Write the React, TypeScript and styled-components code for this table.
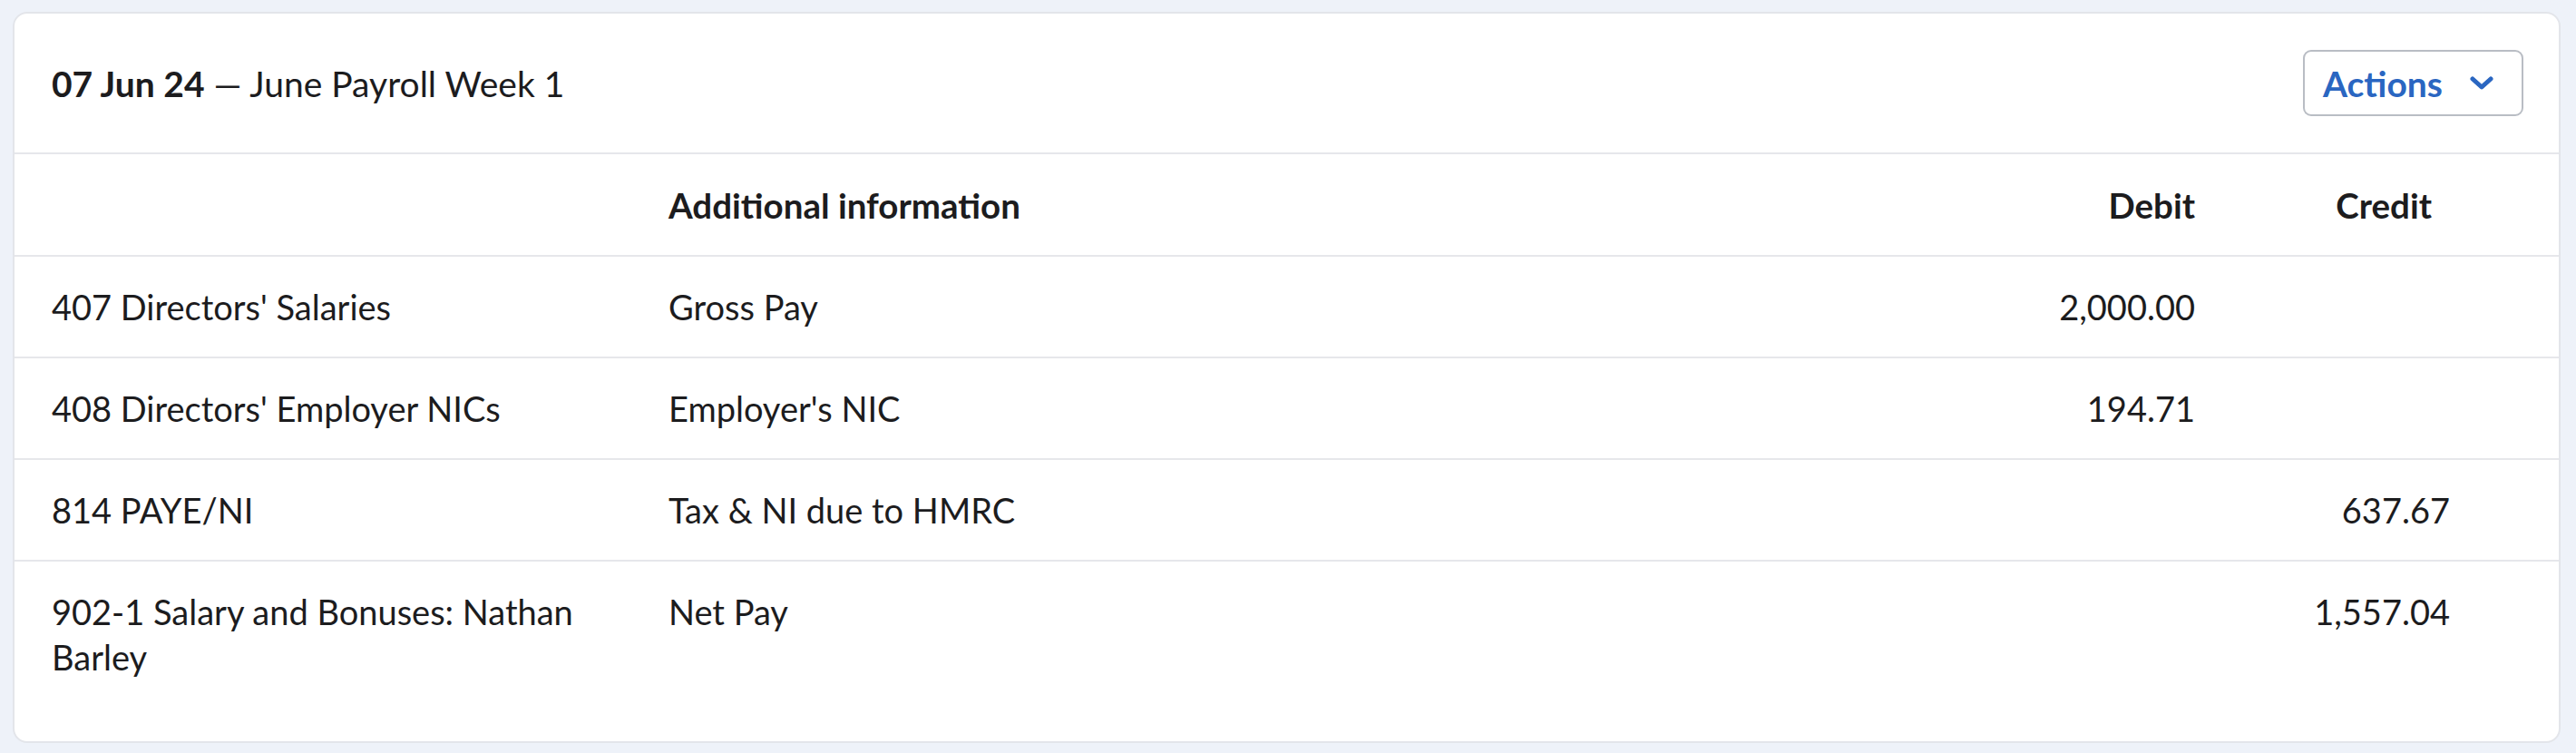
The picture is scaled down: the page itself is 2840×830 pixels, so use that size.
import React from "react";
import styled, { createGlobalStyle } from "styled-components";

const GlobalStyle = createGlobalStyle`
  html, body {
    margin: 0;
    background: #eef2f9;
    font-family: Lato, "Liberation Sans", Arial, sans-serif;
    color: #1c1c1e;
  }
`;

type Line = {
  account: string;
  info: string;
  debit?: string;
  credit?: string;
};

const lines: Line[] = [
  { account: "407 Directors' Salaries", info: "Gross Pay", debit: "2,000.00" },
  { account: "408 Directors' Employer NICs", info: "Employer's NIC", debit: "194.71" },
  { account: "814 PAYE/NI", info: "Tax & NI due to HMRC", credit: "637.67" },
  { account: "902-1 Salary and Bonuses: Nathan Barley", info: "Net Pay", credit: "1,557.04" },
];

function Chevron() {
  return (
    <svg width="26" height="15" viewBox="0 0 26 15" fill="none">
      <path
        d="M3 3l10 9 10-9"
        stroke="currentColor"
        strokeWidth="5"
        strokeLinecap="round"
        strokeLinejoin="round"
      />
    </svg>
  );
}

function App() {
  return (
    <Page>
      <GlobalStyle />
      <Card>
        <Header>
          <Title>
            <strong>07 Jun 24</strong> — June Payroll Week 1
          </Title>
          <ActionsButton type="button">
            Actions
            <Chevron />
          </ActionsButton>
        </Header>
        <Table>
          <HeadRow>
            <Cell />
            <Cell>Additional information</Cell>
            <Cell $align="right">Debit</Cell>
            <Cell $align="right" $inset>
              Credit
            </Cell>
          </HeadRow>
          {lines.map((line) => (
            <Row key={line.account}>
              <Cell>{line.account}</Cell>
              <Cell>{line.info}</Cell>
              <Cell $align="right">{line.debit}</Cell>
              <Cell $align="right">{line.credit}</Cell>
            </Row>
          ))}
        </Table>
      </Card>
    </Page>
  );
}

const Page = styled.div`
  padding: 13px 17px 9px 14px;
`;

const Card = styled.section`
  background: #fff;
  border: 2px solid #e3e5ea;
  border-radius: 16px;
  overflow: hidden;
`;

const Header = styled.header`
  display: flex;
  justify-content: space-between;
  align-items: center;
  box-sizing: border-box;
  height: 155px;
  padding: 0 39px 0 41px;
  border-bottom: 2px solid #e6e7eb;
`;

const Title = styled.h2`
  margin: 0;
  font-size: 39px;
  line-height: 50px;
  font-weight: 400;

  strong {
    font-weight: 700;
  }
`;

const ActionsButton = styled.button`
  display: flex;
  align-items: center;
  gap: 30px;
  box-sizing: border-box;
  height: 73px;
  padding: 0 31px 0 20px;
  background: #fff;
  border: 2px solid #b9bdc4;
  border-radius: 9px;
  color: #2a66c1;
  font-family: inherit;
  font-size: 39px;
  font-weight: 700;
  cursor: pointer;
`;

const Table = styled.div`
  padding-bottom: 38px;
`;

const Row = styled.div`
  display: grid;
  grid-template-columns: 640px 1fr 260px 241px;
  column-gap: 40px;
  padding: 30px 120px 30px 41px;
  border-bottom: 2px solid #e6e7eb;
  font-size: 38px;
  line-height: 50px;

  &:last-child {
    border-bottom: none;
  }
`;

const HeadRow = styled(Row)`
  padding-top: 31px;
  font-size: 38.5px;
  font-weight: 700;
`;

const Cell = styled.div<{ $align?: "left" | "right"; $inset?: boolean }>`
  text-align: ${(p) => p.$align ?? "left"};
  padding-right: ${(p) => (p.$inset ? "20px" : "0")};
`;

export default App;
